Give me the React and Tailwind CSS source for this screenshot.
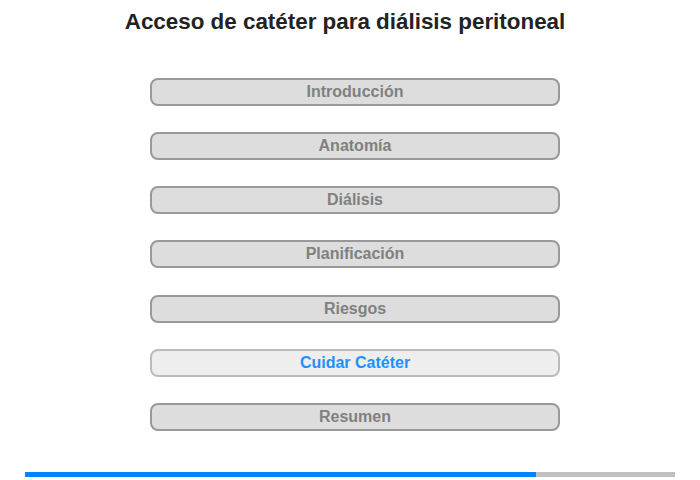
export default function App() {
  const items = [
    { label: "Introducción" },
    { label: "Anatomía" },
    { label: "Diálisis" },
    { label: "Planificación" },
    { label: "Riesgos" },
    { label: "Cuidar Catéter", active: true },
    { label: "Resumen" },
  ];
  return (
    <div className="w-[700px] h-[480px] bg-white overflow-hidden" style={{ fontFamily: '"Liberation Sans", Arial, sans-serif' }}>
      <div className="flex justify-center pr-[10px] pt-[9px]">
        <h1 className="text-[22.4px] leading-[26px] font-bold text-[#222222]">Acceso de catéter para diálisis peritoneal</h1>
      </div>
      <div className="flex flex-col gap-[26.17px] mt-[43px] ml-[150px] w-[410px]">
        {items.map((it) =>
          it.active ? (
            <div key={it.label} className="h-[28px] rounded-[8px] border-2 border-[#bbbbbb] bg-[#eeeeee] flex items-center justify-center text-[16px] font-bold text-[#1e90ff]">
              {it.label}
            </div>
          ) : (
            <div key={it.label} className="h-[28px] rounded-[8px] border-2 border-[#999999] bg-[#dddddd] flex items-center justify-center text-[16px] font-bold text-[#808080]">
              {it.label}
            </div>
          )
        )}
      </div>
      <div className="mt-[41px] ml-[25px] w-[650px] h-[5px] bg-[#c0c0c0] flex">
        <div className="h-full w-[511px] bg-[#0084ff]"></div>
      </div>
    </div>
  );
}
